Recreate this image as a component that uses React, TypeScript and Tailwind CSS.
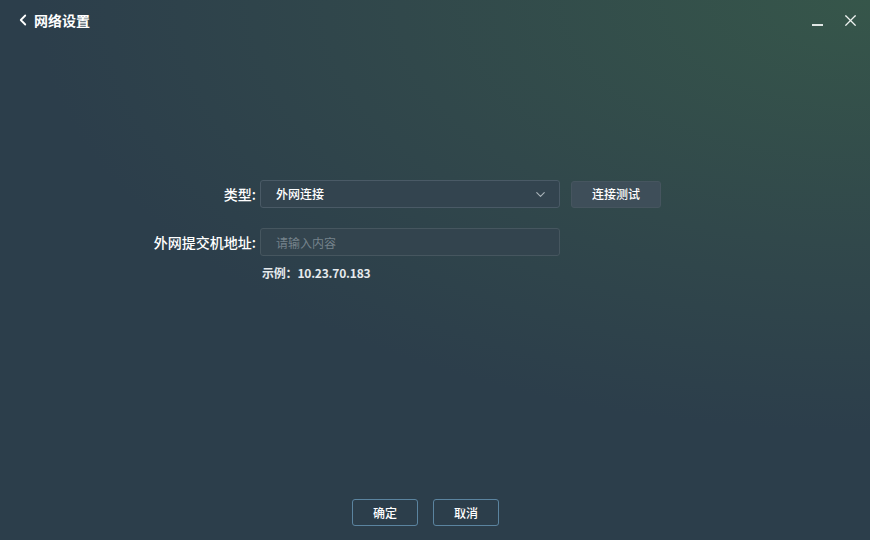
import { ChevronDown, ChevronLeft, X } from "lucide-react";

const font = { fontFamily: '"Microsoft YaHei", "Noto Sans CJK SC", sans-serif' };

export default function App() {
  return (
    <div
      style={font}
      className="relative flex h-[540px] w-[870px] flex-col overflow-hidden bg-[#2c3e4b] text-[13px] text-[#e6eaed]"
    >
      <div className="pointer-events-none absolute inset-0 bg-[radial-gradient(ellipse_120%_100%_at_100%_0%,#36564a_0%,#31484b_45%,transparent_80%)]" />

      {/* title bar */}
      <header className="relative flex h-[40px] items-center justify-between pl-[14px] pr-[10px]">
        <div className="flex items-center gap-[2px]">
          <ChevronLeft className="size-[18px] text-white" strokeWidth={2.4} />
          <span className="text-[14px] font-bold text-white">网络设置</span>
        </div>
        <div className="flex items-center gap-[18px]">
          <span className="mt-[10px] block h-[2px] w-[11px] bg-[#dfe6e4]" />
          <X className="size-[19px] text-[#eef2f1]" strokeWidth={1.5} />
        </div>
      </header>

      {/* form */}
      <main className="relative mt-[140px] flex flex-1 flex-col">
        <div className="flex items-center">
          <label className="w-[257px] pr-[1px] text-right text-[14px] font-medium text-white">类型:</label>
          <button className="ml-[3px] flex h-[28px] w-[300px] items-center justify-between rounded-[3px] border border-[#4a5a66] bg-[#33444f] pl-[15px] pr-[11px] text-[12px] font-medium text-white">
            <span>外网连接</span>
            <ChevronDown className="size-[15px] text-[#aab4ba]" strokeWidth={1.8} />
          </button>
          <button className="ml-[11px] h-[27px] w-[90px] rounded-[3px] border border-[#46555f] bg-[#3e4e59] text-[12px] font-medium text-white">
            连接测试
          </button>
        </div>
        <div className="mt-[20px] flex items-center">
          <label className="w-[257px] pr-[1px] text-right text-[14px] font-medium text-white">外网提交机地址:</label>
          <input
            className="ml-[3px] h-[28px] w-[300px] rounded-[3px] border border-[#46565f] bg-[#33444e] pl-[15px] text-[12px] text-white outline-none placeholder:text-[#75828b]"
            placeholder="请输入内容"
          />
        </div>
        <div className="ml-[262px] mt-[8px] text-[12px] font-semibold tracking-[-0.2px] text-[#e6eaed]">示例：10.23.70.183</div>
      </main>

      {/* footer */}
      <footer className="relative flex justify-center gap-[15px] pb-[14px] pr-[19px]">
        <button className="h-[27px] w-[66px] rounded-[3px] border border-[#5b84a0] text-[12px] font-medium text-white">确定</button>
        <button className="h-[27px] w-[66px] rounded-[3px] border border-[#5b84a0] text-[12px] font-medium text-white">取消</button>
      </footer>
    </div>
  );
}
